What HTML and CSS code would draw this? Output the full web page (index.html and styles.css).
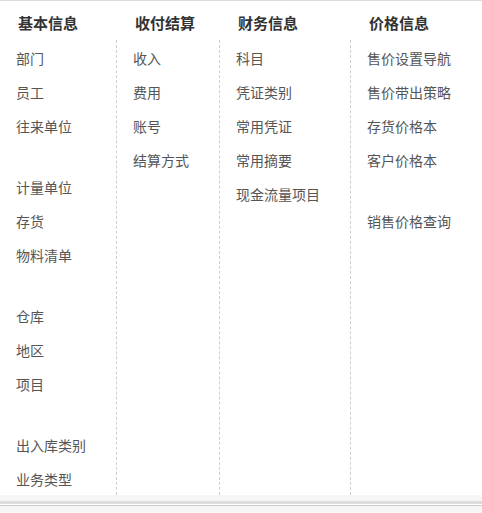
FILE: index.html
```html
<!DOCTYPE html>
<html lang="zh-CN">
<head>
<meta charset="utf-8">
<title>基础设置</title>
<link rel="stylesheet" href="styles.css">
</head>
<body>
<div class="panel">
  <div class="col col-1">
    <div class="col-head">基本信息</div>
    <div class="col-body">
      <ul class="group">
        <li>部门</li><li>员工</li><li>往来单位</li>
      </ul>
      <ul class="group">
        <li>计量单位</li><li>存货</li><li>物料清单</li>
      </ul>
      <ul class="group">
        <li>仓库</li><li>地区</li><li>项目</li>
      </ul>
      <ul class="group">
        <li>出入库类别</li><li>业务类型</li>
      </ul>
    </div>
  </div>
  <div class="col col-2">
    <div class="col-head">收付结算</div>
    <div class="col-body">
      <ul class="group">
        <li>收入</li><li>费用</li><li>账号</li><li>结算方式</li>
      </ul>
    </div>
  </div>
  <div class="col col-3">
    <div class="col-head">财务信息</div>
    <div class="col-body">
      <ul class="group">
        <li>科目</li><li>凭证类别</li><li>常用凭证</li><li>常用摘要</li><li>现金流量项目</li>
      </ul>
    </div>
  </div>
  <div class="col col-4">
    <div class="col-head">价格信息</div>
    <div class="col-body">
      <ul class="group">
        <li>售价设置导航</li><li>售价带出策略</li><li>存货价格本</li><li>客户价格本</li>
      </ul>
      <ul class="group">
        <li>销售价格查询</li>
      </ul>
    </div>
  </div>
</div>
<div class="footer">
  <div class="footer-band"></div>
  <div class="footer-line"></div>
</div>
</body>
</html>
```

FILE: styles.css
```css
html, body {
  margin: 0;
  padding: 0;
  background: #fff;
}

body {
  font-family: "Noto Sans CJK SC", "Noto Sans", sans-serif;
  width: 482px;
  height: 513px;
  overflow: hidden;
  display: flex;
  flex-direction: column;
}

.panel {
  display: flex;
  border-top: 1px solid #dcdcdc;
  height: 495px;
  box-sizing: border-box;
}

.col {
  display: flex;
  flex-direction: column;
}

.col-1 { width: 116px; }
.col-2 { width: 103px; }
.col-3 { width: 131px; }
.col-4 { flex: 1; }

.col-head {
  height: 34px;
  line-height: 34px;
  padding-top: 5px;
  padding-left: 19px;
  font-size: 15px;
  font-weight: bold;
  color: #333;
  white-space: nowrap;
}

.col-1 .col-head { padding-left: 18px; }

.col-body {
  flex: 1;
  border-left: 1px dashed #cfcfcf;
  padding-left: 16px;
  padding-top: 1px;
}

.col-1 .col-body {
  border-left: none;
  padding-left: 16px;
}

.group {
  list-style: none;
  margin: 0;
  padding: 0;
}

.group + .group {
  margin-top: 27px;
}

.group li {
  height: 34px;
  line-height: 34px;
  font-size: 14px;
  color: #555;
  white-space: nowrap;
}

.footer {
  flex: 1;
  background: #f6f6f6;
  padding-top: 6px;
}

.footer-band {
  height: 3px;
  background: #dcdcdc;
  border-bottom: 1px solid #fff;
}

.footer-line {
  height: 1px;
  background: #cdcdcd;
}
```
